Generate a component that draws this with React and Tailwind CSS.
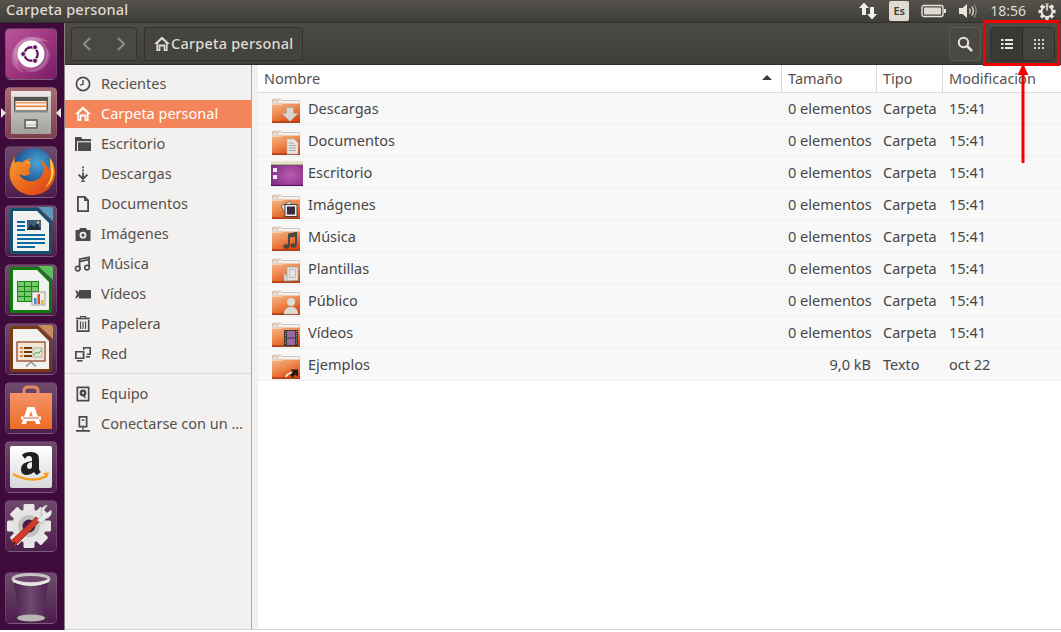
import React from "react";

const D = "#4a4a48";

/* ---------- sidebar glyphs ---------- */
const sb = {
  clock: (c) => (<><circle cx="9" cy="9" r="6.6" fill="none" stroke={c} strokeWidth="1.7" /><path d="M9 5v4.3l-3 .9" fill="none" stroke={c} strokeWidth="1.4" /></>),
  home: (c) => (<path d="M9 1.5 1 9h2.4v7h4v-4.6h3.2V16h4V9H17z M5.2 8 9 4.4 12.8 8v6.2h-.6V9.6H5.8v4.6h-.6z" fill={c} fillRule="evenodd" />),
  folder: (c) => (<><path d="M1 2h6l1.5 2H17v2.3H3V16H1z" fill={c} /><path d="M4 7.3h13V16H4z" fill={c} /></>),
  down: (c) => (<><path d="M9 1.6v1.6M9 4.6v1.6" stroke={c} strokeWidth="1.7" fill="none" /><path d="M9 7.5v6M4.6 9.6 9 14l4.4-4.4" fill="none" stroke={c} strokeWidth="1.8" /><path d="M7 16.2h4" stroke={c} strokeWidth="1.4" /></>),
  doc: (c) => (<path d="M3 1h8l4 4v12H3z M4.8 2.8v12.4h8.4V6H10V2.8z" fill={c} fillRule="evenodd" />),
  cam: (c) => (<path d="M6 3h6l1 2h3.5v11h-15V5H5z M9 6.8a3.4 3.4 0 1 0 0 6.8 3.4 3.4 0 0 0 0-6.8z M9 8.6a1.6 1.6 0 1 1 0 3.2 1.6 1.6 0 0 1 0-3.2z" fill={c} fillRule="evenodd" />),
  music: (c) => (<><path d="M5.6 13.5V4.2L15 2.4v9.6" fill="none" stroke={c} strokeWidth="1.7" /><circle cx="3.8" cy="13.6" r="2.3" fill="none" stroke={c} strokeWidth="1.6" /><circle cx="13" cy="12.6" r="2.3" fill="none" stroke={c} strokeWidth="1.6" /><path d="M5.6 6.5 15 4.7" stroke={c} strokeWidth="1.7" /></>),
  video: (c) => (<path d="M1 5.5h1.5L5 7.5V5h12v8.6H5v-2.4l-2.5 2H1l2-4z" fill={c} />),
  trash: (c) => (<><path d="M2 3.5h14" stroke={c} strokeWidth="1.7" /><path d="M6.5 3V1.5h5V3" fill="none" stroke={c} strokeWidth="1.2" /><path d="M3.3 5v11.2h11.4V5" fill="none" stroke={c} strokeWidth="1.7" /><path d="M6.5 6.5v7.5M9 6.5v7.5M11.5 6.5v7.5" stroke={c} strokeWidth="1.2" /></>),
  net: (c) => (<><path d="M1 6h9.5v8H1z M2.7 7.6v4.8h6V7.6z" fill={c} fillRule="evenodd" /><path d="M3 15h5.5v1.6H3z" fill={c} /><path d="M9 2h8v8h-4V8.4h2.4V3.6H10.6V5H9z" fill={c} /><path d="M12 11h4v1.6h-4z" fill={c} /></>),
  hd: (c) => (<><path d="M2.5 1.5h13v15h-13z M4.2 3.2v11.6h9.6V3.2z" fill={c} fillRule="evenodd" /><circle cx="9" cy="8" r="3.4" fill={c} /><circle cx="9" cy="8" r="1" fill="#f2f1f0" /><path d="M9 10l2.5 3" stroke={c} strokeWidth="1.4" /></>),
  server: (c) => (<><path d="M4.5 1h9v11.5h-9z M6.2 2.7v8.1h5.6V2.7z" fill={c} fillRule="evenodd" /><path d="M7.6 4.4h2.8v1.4H7.6z" fill={c} /><path d="M8.2 12.5h1.6v2.3H8.2zM2 15h14v1.7H2z" fill={c} /></>),
};

const SbIcon = ({ k, c = D }) => (
  <svg width="18" height="18" viewBox="0 0 18 18" className="shrink-0">{sb[k](c)}</svg>
);

const SidebarRow = ({ icon, label, active }) => (
  <div className={`h-7 mb-[2px] flex items-center pl-[9px] ${active ? "bg-[#f4845a] text-white" : "text-[#55504c]"}`}>
    <SbIcon k={icon} c={active ? "#ffffff" : D} />
    <span className="ml-[9px] whitespace-nowrap">{label}</span>
  </div>
);

/* ---------- folder icons ---------- */
const emblems = {
  down: <path d="M16.5 11.5h7v6H28l-8 8-8-8h4.500z" fill="#d9d7d2" stroke="#a8a6a2" strokeWidth=".6" />,
  doc: (<><path d="M17 11h7l4 4v11H17z" fill="#e6e5e1" stroke="#bdbbb6" strokeWidth=".6" /><path d="M19 15h5M19 17.500h7M19 20h7M19 22.500h7" stroke="#a9a7a2" strokeWidth="1" /></>),
  img: (<><path d="M11 14 20 9l3 5-9 6z" fill="#d8d6d1" stroke="#55504c" strokeWidth=".7" /><rect x="15" y="12.500" width="12" height="12" fill="#f1f0ee" stroke="#44403d" /><rect x="17" y="14.500" width="8" height="8" fill="#3a2c3c" /></>),
  music: (<><path d="M19 22V10.500l7-1.500V21" fill="none" stroke="#4b4744" strokeWidth="2" /><ellipse cx="16.500" cy="22.500" rx="3" ry="2.300" fill="#4b4744" /><ellipse cx="23.500" cy="21.500" rx="3" ry="2.300" fill="#4b4744" /><path d="M19 12.500l7-1.500" stroke="#4b4744" strokeWidth="2.400" /></>),
  tpl: (<><path d="M14 25V17l8 8z" fill="#dedcd8" stroke="#a7a5a1" strokeWidth=".7" /><rect x="17" y="11" width="11" height="13.500" fill="#e6e5e1" stroke="#a7a5a1" strokeWidth=".8" /><rect x="19.500" y="13.500" width="6" height="8" fill="none" stroke="#b5b3ae" strokeWidth=".8" /></>),
  user: (<><circle cx="21" cy="14" r="4" fill="#dddbd6" /><path d="M14 26c0-4 2-6 5-7h4c3 1 5 3 5 7z" fill="#dddbd6" stroke="#bdbbb6" strokeWidth=".4" /></>),
  film: (<><rect x="14" y="10" width="14" height="16" fill="#3c3836" /><rect x="17" y="11" width="8" height="6.500" fill="#9a6aa0" /><rect x="17" y="18.500" width="8" height="6.500" fill="#9a6aa0" /><path d="M15.500 11v14M26.500 11v14" stroke="#8f8c88" strokeWidth="1.100" strokeDasharray="1 1" /></>),
  link: (<><path d="M16 25c1-3 3-4 6-4" fill="none" stroke="#fff" strokeWidth="1.500" /><path d="M20.500 17.500H28V25l-2.500-2.500-3 3-2.500-2.500 3-3z" fill="#1e1c1b" /></>),
};

const Folder = ({ emblem, id }) => (
  <svg width="32" height="32" viewBox="0 0 32 32" className="shrink-0">
    <defs>
      <linearGradient id={id} x1="0" y1="0" x2=".55" y2="1">
        <stop offset="0" stopColor="#f6b88e" />
        <stop offset=".5" stopColor="#ee8a50" />
        <stop offset="1" stopColor="#dc4a12" />
      </linearGradient>
    </defs>
    <g transform="translate(0 3)">
      <path d="M2.500 7.200V3.300h8l1 1.200H29.500v3z" fill="#f7f6f4" stroke="#b9b7b3" strokeWidth=".8" />
      <path d="M3.500 5h5.500" stroke="#f39a64" strokeWidth="1" />
      <path d="M2 8.300h9l2-1.300h17v20H2z" fill={`url(#${id})`} />
      <path d="M2 25.500h28V27H2z" fill="#a93c12" />
      <path d="M2 8.300h9l2-1.300h17v.8H13.300l-2 1.300H2z" fill="#fbd7bd" />
      {emblems[emblem]}
    </g>
  </svg>
);

const DesktopIcon = () => (
  <svg width="34" height="32" viewBox="0 0 34 32" className="shrink-0">
    <defs>
      <radialGradient id="dsk" cx=".6" cy=".55" r=".7">
        <stop offset="0" stopColor="#bd5bb0" />
        <stop offset="1" stopColor="#7d2a83" />
      </radialGradient>
    </defs>
    <g transform="translate(0 2.500)">
      <rect x="1" y="1.500" width="32" height="25" rx="1.500" fill="url(#dsk)" />
      <rect x="1" y="1.500" width="32" height="4" fill="#e6e1c8" />
      <path d="M1 5.500h32" stroke="#5b5a4a" strokeWidth=".8" />
      <rect x="3" y="8.500" width="4" height="4" fill="#f3ecf3" />
      <rect x="3" y="15.500" width="4" height="4" fill="#f3ecf3" />
      <path d="M1 26h32" stroke="#56165c" strokeWidth="1.200" />
    </g>
  </svg>
);

/* ---------- dock tiles ---------- */
const Tile = ({ children, active, className = "" }) => (
  <div className={`relative w-[52px] h-[52px] rounded-[5px] shrink-0 flex items-center justify-center border border-[#ffffff1c] ${active ? "bg-gradient-to-b from-[#a86a72] to-[#7c3f52]" : "bg-gradient-to-b from-[#6f4a6d] to-[#4d1e4b]"} ${className}`}>
    {children}
  </div>
);

const Ubuntu = () => (
  <svg width="52" height="52" viewBox="0 0 52 52" className="rounded-[5px]">
    <defs>
      <linearGradient id="ubg" x1="0" y1="0" x2="1" y2="1">
        <stop offset="0" stopColor="#b9569f" />
        <stop offset=".5" stopColor="#a0357f" />
        <stop offset="1" stopColor="#7b1c66" />
      </linearGradient>
    </defs>
    <rect width="52" height="52" rx="5" fill="url(#ubg)" />
    <path d="M6 28C8 10 30 2 46 14 36 10 12 14 12 34 12 40 16 44 22 46 12 44 5 38 6 28z" fill="#ffffff" opacity=".22" />
    <path d="M46 26c0 14-14 22-26 18 14 0 24-8 22-24 2 2 4 4 4 6z" fill="#ffffff" opacity=".16" />
    <circle cx="26" cy="26" r="18" fill="#ffffff" opacity=".18" />
    <circle cx="26" cy="26" r="14" fill="#fff" />
    <circle cx="26" cy="26" r="7" fill="none" stroke="#6a1560" strokeWidth="2.400" />
    <circle cx="17.800" cy="26" r="2.600" fill="#6a1560" stroke="#fff" strokeWidth=".9" />
    <circle cx="30.200" cy="18.900" r="2.600" fill="#6a1560" stroke="#fff" strokeWidth=".9" />
    <circle cx="30.200" cy="33.100" r="2.600" fill="#6a1560" stroke="#fff" strokeWidth=".9" />
  </svg>
);

const Files = () => (
  <svg width="44" height="46" viewBox="0 0 44 46">
    <defs>
      <linearGradient id="fg" x1="0" y1="0" x2="0" y2="1">
        <stop offset="0" stopColor="#d9d8d5" />
        <stop offset="1" stopColor="#a3a19d" />
      </linearGradient>
    </defs>
    <path d="M2 3q0-2 2-2h36q2 0 2 2v41H2z" fill="url(#fg)" />
    <path d="M2 1h40v5H2z" fill="#efeeec" opacity=".7" />
    <rect x="5" y="7" width="34" height="14" fill="#5a544f" />
    <rect x="6.500" y="11" width="31" height="9" fill="#f4f0e8" />
    <path d="M6.500 12h31v1.500h-31z" fill="#f29a5d" />
    <path d="M6.500 15.500h31V17h-31z" fill="#ef7f3e" />
    <rect x="5" y="20" width="34" height="2.500" fill="#8b8985" />
    <rect x="15" y="29" width="14" height="10" rx="1" fill="#74726e" />
    <rect x="17" y="31" width="10" height="6" fill="#efeeec" />
    <rect x="17" y="34.500" width="10" height="1" fill="#b4b2ae" />
  </svg>
);

const Firefox = () => (
  <svg width="50" height="50" viewBox="0 0 50 50">
    <defs>
      <radialGradient id="ffb" cx=".6" cy=".35" r=".65">
        <stop offset="0" stopColor="#4aa3d8" />
        <stop offset="1" stopColor="#14407f" />
      </radialGradient>
      <linearGradient id="ffo" x1="0" y1="0" x2="1" y2="1">
        <stop offset="0" stopColor="#f8a12c" />
        <stop offset=".6" stopColor="#e9601a" />
        <stop offset="1" stopColor="#d2391a" />
      </linearGradient>
    </defs>
    <circle cx="27" cy="22" r="21" fill="url(#ffb)" />
    <path d="M9 10c-5 8-7 16-4 24 4 10 14 15 24 14 10-1 18-8 20-18 1-7-1-14-5-19 1 5 0 9-2 12-1-5-4-8-8-10 3 4 4 9 3 13-2 6-8 9-14 8-5-1-9-4-10-7 3 2 6 2 9 1 3-1 3-3 1-4-1-2 1-3 2-5 1-1-1-2-4-3 1-2 3-3 5-4-5 0-9 2-10 4-2-2-5-2-7 0-1-2 0-4 0-6z" fill="url(#ffo)" />
    <path d="M44 11c3 5 5 12 3 19-1 4-4 8-8 11 4-5 6-10 6-15 0-5-1-10-1-15z" fill="#f8cf3f" />
    <path d="M20 15c2-1 4 0 5 1-2 1-3 1-5-1z" fill="#f6b73c" />
  </svg>
);

const LO = ({ frame, corner, children }) => (
  <svg width="44" height="48" viewBox="0 0 44 48">
    <path d="M1 3q0-2 2-2h26l14 14v30q0 2-2 2H3q-2 0-2-2z" fill={frame} />
    <path d="M4 4h24l12 12v28H4z" fill="#f1f1ef" />
    <path d="M29 0h13q2 0 2 2v12z" fill={corner} />
    {children}
  </svg>
);

const Writer = () => (
  <LO frame="#14506f" corner="#5a9cbf">
    <path d="M8 14h8v2H8zM8 18h8v2H8zM8 22h8v2H8z" fill="#0b6aa0" />
    <rect x="18" y="13" width="14" height="10" fill="#3e5f80" />
    <path d="M18 23l4-6 3 3 3-4 4 7z" fill="#232c3b" />
    <circle cx="29" cy="15.500" r="1.300" fill="#e5c65b" />
    <path d="M8 27h28v2H8zM8 31h28v2H8zM8 35h28v2H8zM8 39h18v2H8z" fill="#0b6aa0" />
  </LO>
);

const Calc = () => (
  <LO frame="#117a0f" corner="#5cbf5a">
    <rect x="8" y="15" width="22" height="21" fill="#79c86f" />
    <path d="M8.500 15v21M15.500 15v21M22.500 15v21M29.500 15v21M8 15.500h22M8 20.500h22M8 25.500h22M8 30.500h22M8 35.500h22" stroke="#148a13" strokeWidth="1" />
    <rect x="23" y="26" width="13" height="13" fill="#eeeeec" stroke="#8c8c8a" strokeWidth=".8" />
    <rect x="25" y="32" width="2.500" height="6" fill="#3b8fd0" />
    <rect x="28.500" y="28" width="2.500" height="10" fill="#d9502b" />
    <rect x="32" y="34" width="2.500" height="4" fill="#e9b22f" />
  </LO>
);

const Impress = () => (
  <LO frame="#7a3a13" corner="#c98a5c">
    <rect x="8" y="17" width="28" height="19" fill="#f3e6d8" stroke="#8a3c12" strokeWidth="1.200" />
    <path d="M11 22h3v2h-3zM11 26h3v2h-3zM11 30h3v2h-3z" fill="#e5812f" />
    <path d="M15 22h8v2h-8zM15 26h8v2h-8zM15 30h8v2h-8z" fill="#6e3a12" />
    <rect x="24" y="23" width="9" height="9" fill="#dfeacc" stroke="#8a8a84" strokeWidth=".6" />
    <path d="M25 30l2.500-3 2 1.500 3-3.500" stroke="#3f9a3a" strokeWidth="1" fill="none" />
    <path d="M22 37l-5 4.500M22 37l5 4.500" stroke="#8a8a84" strokeWidth="1.200" />
  </LO>
);

const Store = () => (
  <svg width="44" height="46" viewBox="0 0 44 46">
    <defs>
      <linearGradient id="stg" x1="0" y1="0" x2="0" y2="1">
        <stop offset="0" stopColor="#f39468" />
        <stop offset="1" stopColor="#ee6c24" />
      </linearGradient>
    </defs>
    <path d="M15 10V6q0-4 4-4h6q4 0 4 4v4" fill="none" stroke="#e88a60" strokeWidth="3" />
    <rect x="1" y="8" width="42" height="36" fill="url(#stg)" />
    <path d="M18.500 22h7l6 17h-4.500l-1-3h-8l-1 3H12.500z M22 26l-1.800 5.500h3.600z" fill="#fff" fillRule="evenodd" />
    <path d="M12 31.500h20v3H12z" fill="#fff" />
    <path d="M14 32.500h16v1H14z" fill="#e05a2a" />
  </svg>
);

const Amazon = () => (
  <svg width="42" height="42" viewBox="0 0 42 42">
    <defs>
      <linearGradient id="amg" x1="0" y1="0" x2="0" y2="1">
        <stop offset="0" stopColor="#ffffff" />
        <stop offset="1" stopColor="#d8d8d8" />
      </linearGradient>
    </defs>
    <rect width="42" height="42" rx="2" fill="url(#amg)" />
    <path d="M12 9q2-3 9-3 8 0 8 7v10q0 2 2 3l-4 3q-2-1-3-3-3 3-7 3-6 0-6-6 0-7 11-8v-2q0-3-3-3-3 0-4 3z M22 16q-5 .5-5 4 0 3 2.500 3 2.500 0 2.500-3z" fill="#1f1f1f" fillRule="evenodd" />
    <path d="M3 28q18 10 34 2" fill="none" stroke="#f79a17" strokeWidth="2.200" />
    <path d="M33 27l6-.5-2 5z" fill="#f79a17" />
  </svg>
);

const Settings = () => (
  <svg width="48" height="48" viewBox="0 0 48 48">
    <defs>
      <linearGradient id="wr" x1="0" y1="0" x2="1" y2="0">
        <stop offset="0" stopColor="#e0e0de" />
        <stop offset="1" stopColor="#f6f6f4" />
      </linearGradient>
    </defs>
    <g transform="translate(22 24)">
      {[0, 45, 90, 135, 180, 225, 270, 315].map((a) => (
        <rect key={a} x="-5.500" y="-22" width="11" height="10" rx="1.500" fill="#e8e8e6" transform={`rotate(${a})`} />
      ))}
      <circle r="17" fill="#e4e4e2" />
      <circle r="11" fill="#c3c2bf" />
      <circle r="6.500" fill="#4a1c48" />
    </g>
    <path d="M5 41 30 17l4 4-25 25z" fill="#cf3a2a" stroke="#8e2216" strokeWidth=".8" transform="translate(-1 -2)" />
    <circle cx="7" cy="41" r="1.500" fill="#651a10" />
    <path d="M30 18l5-5q-3-7 4-10l1.500 .5-3.500 4.500 2.500 3 5-3q1 7-6 9l-4 5z" fill="url(#wr)" stroke="#8f8e8b" strokeWidth=".6" />
  </svg>
);

const Trash = () => (
  <svg width="40" height="50" viewBox="0 0 40 50">
    <defs>
      <linearGradient id="trg" x1="0" y1="0" x2="1" y2="0">
        <stop offset="0" stopColor="#4e234f" />
        <stop offset=".5" stopColor="#6f4a70" />
        <stop offset="1" stopColor="#4e234f" />
      </linearGradient>
    </defs>
    <path d="M3 9l5 37h24l5-37z" fill="url(#trg)" />
    <ellipse cx="20" cy="45" rx="14" ry="3.500" fill="#b9b7b4" />
    <ellipse cx="20" cy="6" rx="18" ry="4.500" fill="none" stroke="#c6c5c3" strokeWidth="3" />
    <path d="M2 6v3q18 8 36 0V6q-18 8-36 0z" fill="#e6e6e4" />
  </svg>
);

/* ---------- panel indicators ---------- */
const Panel = () => (
  <div className="h-[23px] shrink-0 flex items-center bg-gradient-to-b from-[#55534c] to-[#3f3e39] text-[#dfdbd2] border-b border-[#2f2e2a]">
    <span className="ml-[6px] mb-[3px] font-medium text-[14.500px] tracking-[0.2px]">Carpeta personal</span>
    <div className="ml-auto flex items-center">
      <svg width="20" height="18" viewBox="0 0 20 18" className="mr-[11px]">
        <path d="M6 0.500 1 6h3v7h4V6h3z" fill="#f1efe9" />
        <path d="M14 17.500 9 12h3V5h4v7h3z" fill="#f1efe9" />
      </svg>
      <div className="w-5 h-5 rounded-[2px] bg-[#dfdbd2] text-[#3c3b37] text-[11px] font-semibold flex items-center justify-center mr-[12px]">Es</div>
      <svg width="25" height="14" viewBox="0 0 25 14" className="mr-[12px]">
        <rect x="1" y="1.500" width="21" height="11" rx="2" fill="none" stroke="#e8e5dd" strokeWidth="1.400" />
        <rect x="3" y="3.500" width="17" height="7" fill="#e0dcd2" />
        <rect x="23" y="5" width="2" height="4" fill="#e8e5dd" />
      </svg>
      <svg width="20" height="18" viewBox="0 0 20 18" className="mr-[12px]">
        <path d="M1 6h3.500L9 2v14l-4.500-4H1z" fill="#e8e5dd" />
        <path d="M11.500 6.500q1.500 2.500 0 5M13.800 4.500q3 4.500 0 9" fill="none" stroke="#e8e5dd" strokeWidth="1.300" />
        <path d="M16.200 2.500q4 6.500 0 13" fill="none" stroke="#8e8c85" strokeWidth="1.300" />
      </svg>
      <span className="text-[14px] mb-[2px] mr-[12px] text-[#dfdbd2]">18:56</span>
      <svg width="18" height="18" viewBox="0 0 18 18" className="mr-[5px]">
        <g transform="translate(9 9.500)" fill="#e8e5dd">
          {[0, 45, 90, 135, 180, 225, 270, 315].map((a) => (
            <rect key={a} x="-1.700" y="-8.500" width="3.400" height="3.500" transform={`rotate(${a})`} />
          ))}
        </g>
        <circle cx="9" cy="9.500" r="5.400" fill="none" stroke="#e8e5dd" strokeWidth="1.800" />
        <path d="M9 1.500v7" stroke="#47453f" strokeWidth="3.400" />
        <path d="M9 2v6.500" stroke="#e8e5dd" strokeWidth="1.600" />
      </svg>
    </div>
  </div>
);

const Toolbar = () => (
  <div className="h-[42px] shrink-0 flex items-center pl-[6px] pr-[6px] bg-gradient-to-b from-[#4d4b45] to-[#403f3a] border-b border-[#2e2d29]">
    <div className="w-[66px] h-[34px] rounded-[4px] border border-[#33322e] bg-[#4a4842] flex items-center">
      <svg width="32" height="32" viewBox="0 0 32 32"><path d="M18 10l-6 6 6 6" fill="none" stroke="#8f8d86" strokeWidth="2" /></svg>
      <svg width="32" height="32" viewBox="0 0 32 32"><path d="M14 10l6 6-6 6" fill="none" stroke="#8f8d86" strokeWidth="2" /></svg>
    </div>
    <div className="ml-[7px] h-[34px] w-[159px] rounded-[2px] border border-[#33322e] bg-[#45433d] flex items-center pl-[8px] text-[#dfdbd2]">
      <svg width="18" height="18" viewBox="0 0 18 18" className="shrink-0">{sb.home("#dfdbd2")}</svg>
      <span className="font-medium text-[14.500px] tracking-[0.2px] whitespace-nowrap">Carpeta personal</span>
    </div>
    <div className="ml-auto w-8 h-[34px] rounded-[4px] border border-[#5b5952] bg-[#4a4842] flex items-center justify-center">
      <svg width="18" height="18" viewBox="0 0 18 18"><circle cx="7.500" cy="7.500" r="4.700" fill="none" stroke="#e8e5dd" strokeWidth="2" /><path d="M11 11l5 5" stroke="#e8e5dd" strokeWidth="2.600" /></svg>
    </div>
    <div className="ml-[9px] w-[65px] h-[34px] rounded-[4px] border border-[#2f2e2a] flex overflow-hidden">
      <div className="w-[32px] bg-[#3a3935] border-r border-[#2a2926] flex items-center justify-center">
        <svg width="14" height="12" viewBox="0 0 14 12" fill="#e8e5dd"><path d="M1 1h2.500v2H1zM5 1h8v2H5zM1 5h2.500v2H1zM5 5h8v2H5zM1 9h2.500v2H1zM5 9h8v2H5z" /></svg>
      </div>
      <div className="flex-1 bg-[#45433e] flex items-center justify-center">
        <svg width="12" height="12" viewBox="0 0 12 12" fill="#d5d2ca"><path d="M1 1h2v2H1zM5 1h2v2H5zM9 1h2v2H9zM1 5h2v2H1zM5 5h2v2H5zM9 5h2v2H9zM1 9h2v2H1zM5 9h2v2H5zM9 9h2v2H9z" /></svg>
      </div>
    </div>
  </div>
);

const places = [
  ["clock", "Recientes"],
  ["home", "Carpeta personal", true],
  ["folder", "Escritorio"],
  ["down", "Descargas"],
  ["doc", "Documentos"],
  ["cam", "Imágenes"],
  ["music", "Música"],
  ["video", "Vídeos"],
  ["trash", "Papelera"],
  ["net", "Red"],
];

const files = [
  ["down", "Descargas"],
  ["doc", "Documentos"],
  [null, "Escritorio"],
  ["img", "Imágenes"],
  ["music", "Música"],
  ["tpl", "Plantillas"],
  ["user", "Público"],
  ["film", "Vídeos"],
  ["link", "Ejemplos", "9,0 kB", "Texto", "oct 22"],
];

const HeadCell = ({ className, children }) => (
  <div className={`h-full flex items-center pl-[6px] border-r border-[#dcdad7] ${className}`}>{children}</div>
);

export default function App() {
  return (
    <div className="relative w-[1061px] h-[632px] overflow-hidden flex flex-col bg-white text-[14.500px] font-['Noto_Sans',sans-serif]">
      <Panel />
      <div className="flex flex-1 min-h-0">
        <aside className="w-[65px] shrink-0 h-[607px] bg-[#3f0a3c] border-r border-[#8d7f8c] flex flex-col items-start pl-[5px] pt-[5px] pb-[7px] gap-[7px] relative">
          <Tile><Ubuntu /></Tile>
          <Tile active>
            <Files />
            <span className="absolute left-[-5px] top-[20px] w-0 h-0 border-y-[5px] border-y-transparent border-l-[5px] border-l-[#e8e6e3]" />
            <span className="absolute right-[-5px] top-[20px] w-0 h-0 border-y-[5px] border-y-transparent border-r-[5px] border-r-[#e8e6e3]" />
          </Tile>
          <Tile><Firefox /></Tile>
          <Tile><Writer /></Tile>
          <Tile><Calc /></Tile>
          <Tile><Impress /></Tile>
          <Tile><Store /></Tile>
          <Tile><Amazon /></Tile>
          <Tile><Settings /></Tile>
          <Tile className="mt-[13px]"><Trash /></Tile>
        </aside>
        <div className="flex-1 min-w-0 flex flex-col h-[607px]">
          <Toolbar />
          <div className="flex flex-1 min-h-0 border-b border-[#d8d6d1]">
            <nav className="w-[187px] shrink-0 bg-[#f2f1f0] border-r border-[#a9a7a3] pt-[5px]">
              {places.map(([i, l, a]) => (<SidebarRow key={l} icon={i} label={l} active={a} />))}
              <div className="h-px bg-[#dcdad7] mt-[5px] mb-[6px]" />
              <SidebarRow icon="hd" label="Equipo" />
              <SidebarRow icon="server" label="Conectarse con un …" />
            </nav>
            <div className="w-[6px] shrink-0 bg-[#f2f1f0]" />
            <main className="flex-1 min-w-0 bg-white">
              <div className="h-[28px] flex items-center text-[#55504c] border-b border-[#dcdad7]">
                <HeadCell className="w-[524px] relative">
                  Nombre
                  <span className="absolute right-[9px] top-[10px] w-0 h-0 border-x-[5px] border-x-transparent border-b-[5px] border-b-[#3c3b37]" />
                </HeadCell>
                <HeadCell className="w-[95px]">Tamaño</HeadCell>
                <HeadCell className="w-[66px]">Tipo</HeadCell>
                <div className="pl-[6px] whitespace-nowrap">Modificación</div>
              </div>
              {files.map(([e, name, size, type, date], i) => (
                <div key={name} className="h-[32px] flex items-center bg-[#f8f8f8] border-b border-[#eeeeee] text-[#474747]">
                  <div className="w-[524px] flex items-center pl-[12px] gap-[6px]">
                    <div className="w-[32px] flex">
                      {e ? <Folder emblem={e} id={`f${i}`} /> : <DesktopIcon />}
                    </div>
                    {name}
                  </div>
                  <div className={`w-[95px] pl-[6px] pr-[6px] whitespace-nowrap ${size ? "text-right" : ""}`}>{size || "0 elementos"}</div>
                  <div className="w-[66px] pl-[6px]">{type || "Carpeta"}</div>
                  <div className="pl-[6px]">{date || "15:41"}</div>
                </div>
              ))}
            </main>
          </div>
        </div>
      </div>
      {/* annotation overlay */}
      <div className="absolute left-[983px] top-[20px] w-[77px] h-[46px] border-[3px] border-[#f50000]" />
      <svg className="absolute left-[1013px] top-[60px]" width="20" height="105" viewBox="0 0 20 105">
        <path d="M10 4v99" stroke="#f50000" strokeWidth="3" />
        <path d="M10 4 4.500 15h11z" fill="#f50000" />
      </svg>
    </div>
  );
}
